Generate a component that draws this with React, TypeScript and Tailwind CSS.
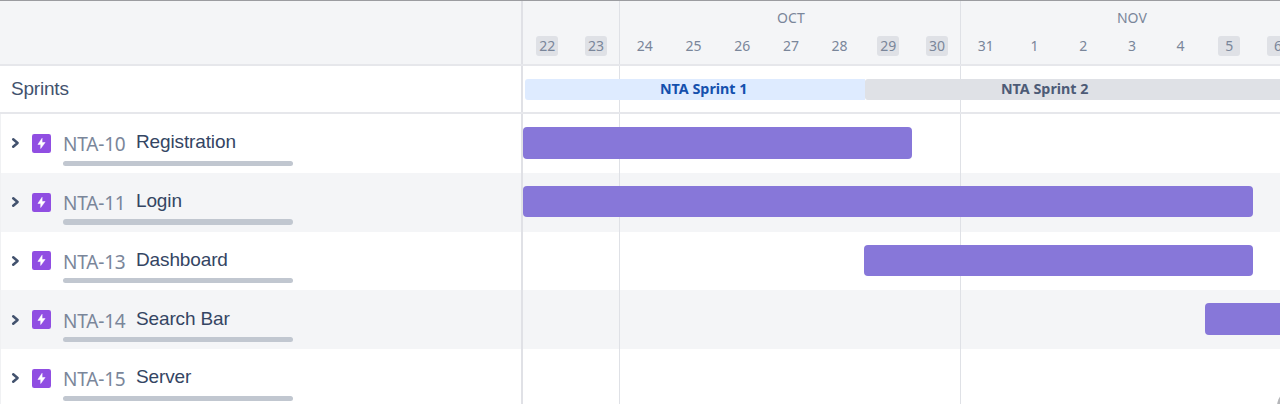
import type { ReactNode } from 'react';
import clsx from 'clsx';

type Epic = { id: string; name: string; bar?: string };

const epics: Epic[] = [
  { id: 'NTA-10', name: 'Registration', bar: 'ml-0 w-[389.3px]' },
  { id: 'NTA-11', name: 'Login', bar: 'ml-0 w-[730.3px]' },
  { id: 'NTA-13', name: 'Dashboard', bar: 'ml-[341px] w-[389.3px]' },
  { id: 'NTA-14', name: 'Search Bar', bar: 'ml-[682px] w-[389px]' },
  { id: 'NTA-15', name: 'Server' },
];

const weeks = [
  { month: '', days: [22, 23], width: 'w-[97.4px]' },
  { month: 'OCT', days: [24, 25, 26, 27, 28, 29, 30], width: 'w-[341px]' },
  { month: 'NOV', days: [31, 1, 2, 3, 4, 5, 6], width: 'w-[341px]' },
];

const weekend = new Set([22, 23, 29, 30, 5, 6]);

function Track({ children }: { children?: ReactNode }) {
  return (
    <div className="grid min-w-0 flex-1 overflow-hidden border-l-2 border-[#e0e1e6]">
      <div className="col-start-1 row-start-1 flex">
        {weeks.map((w, i) => (
          <div
            key={i}
            className={clsx('shrink-0', w.width, i < 2 && 'border-r border-[#dfe1e6]')}
          />
        ))}
      </div>
      <div className="z-10 col-start-1 row-start-1 flex min-w-0 items-start">{children}</div>
    </div>
  );
}

function Chevron() {
  return (
    <svg width="10" height="12" viewBox="0 0 10 12" className="ml-[11px] shrink-0" fill="none">
      <path d="M2.2 2.2 6.6 6 2.2 9.8" stroke="#42526e" strokeWidth="2.5" strokeLinecap="round" strokeLinejoin="round" />
    </svg>
  );
}

function EpicIcon() {
  return (
    <svg width="19" height="19" viewBox="0 0 19 19" className="ml-[11px] shrink-0">
      <rect width="19" height="19" rx="2.2" fill="#904ee2" />
      <path d="M10.1 4.3v4.2h3L8.7 14.5v-4.1H5.9z" fill="#fff" stroke="#fff" strokeWidth=".5" strokeLinejoin="round" />
    </svg>
  );
}

function Header() {
  return (
    <div className="flex h-[66px] shrink-0 border-b-2 border-t border-b-[#e6e7eb] border-t-[#9b9ca0] bg-[#f4f5f7]">
      <div className="w-[521px] shrink-0" />
      <Track>
        {weeks.map((w, i) => (
          <div
            key={i}
            className={clsx(
              "flex shrink-0 flex-col pt-[8px] font-['Noto_Sans',sans-serif] text-[14px] text-[#7a869a]",
              w.width,
            )}
          >
            <div className="h-[18px] text-center text-[14px] leading-[18px]">{w.month}</div>
            <div className="mt-[9px] flex">
              {w.days.map((d) => (
                <div key={d} className="flex flex-1 justify-center">
                  <span
                    className={clsx(
                      'h-[20px] w-[22px] rounded-[3px] text-center leading-[20px]',
                      weekend.has(d) && 'bg-[#dfe1e6]',
                    )}
                  >
                    {d}
                  </span>
                </div>
              ))}
            </div>
          </div>
        ))}
      </Track>
    </div>
  );
}

function Sprints() {
  return (
    <div className="flex h-[48px] shrink-0 border-b-2 border-[#e6e7eb] bg-white">
      <div className="flex w-[521px] shrink-0 items-center pl-[11px] font-['Liberation_Sans',sans-serif] text-[19px] tracking-[-0.2px] text-[#42526e]">
        Sprints
      </div>
      <Track>
        <div className="mt-[13px] flex h-[20.5px] pl-[2px] font-['Noto_Sans',sans-serif] text-[14.3px] font-bold leading-[20px]">
          <div className="w-[340px] shrink-0 rounded-l-[3px] bg-[#deebff] pl-[135px] text-[#1450ad]">
            NTA Sprint 1
          </div>
          <div className="w-[500px] shrink-0 rounded-l-[3px] bg-[#dfe1e6] pl-[136px] text-[#4d5b76]">
            NTA Sprint 2
          </div>
        </div>
      </Track>
    </div>
  );
}

function EpicRow({ epic, striped }: { epic: Epic; striped: boolean }) {
  return (
    <div className={clsx('flex h-[58.75px] shrink-0', striped ? 'bg-[#f4f5f7]' : 'bg-white')}>
      <div className="w-[521px] shrink-0 border-l border-[#f0f1f3]">
        <div className="-ml-px flex h-[46.5px] items-center pt-[12px]">
          <Chevron />
          <EpicIcon />
          <span className="ml-[12px] w-[73px] shrink-0 pt-[2px] font-['Noto_Sans',sans-serif] text-[19px] leading-[26px] tracking-[-0.2px] text-[#7a869a]">
            {epic.id}
          </span>
          <span className="pb-[2px] font-['Liberation_Sans',sans-serif] text-[19px] leading-[26px] tracking-[-0.13px] text-[#344563]">
            {epic.name}
          </span>
        </div>
        <div className="ml-[62px] h-[5.3px] w-[230px] rounded-full bg-[#c1c7d0]" />
      </div>
      <Track>
        {epic.bar && (
          <div className={clsx('mt-[13px] h-[31.7px] shrink-0 rounded-[4px] bg-[#8777d9]', epic.bar)} />
        )}
      </Track>
    </div>
  );
}

export default function App() {
  return (
    <div className="relative flex h-[404px] w-[1280px] flex-col overflow-hidden bg-white">
      <Header />
      <Sprints />
      {epics.map((epic, i) => (
        <EpicRow key={epic.id} epic={epic} striped={i % 2 === 1} />
      ))}
      <div className="absolute left-[1277px] top-[387px] size-[40px] rounded-full bg-[#b5b6b9]" />
    </div>
  );
}
